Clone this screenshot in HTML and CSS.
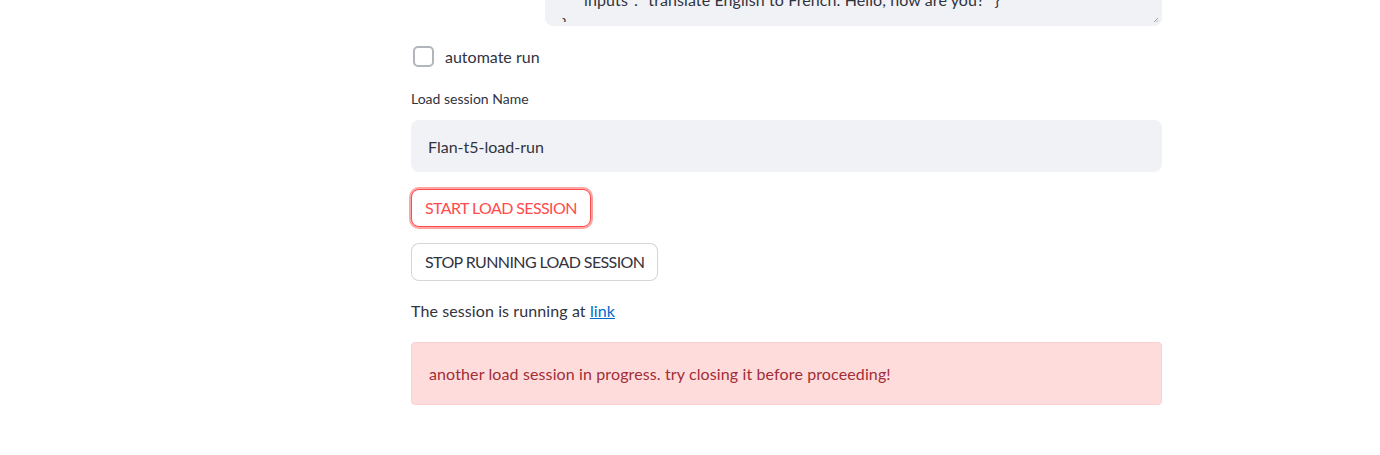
FILE: index.html
```html
<!DOCTYPE html>
<html>
<head>
<meta charset="utf-8">
<link rel="stylesheet" href="styles.css">
</head>
<body>
<div class="main">
  <div class="textarea">
    <div class="clip">
      <div class="code">
        <div class="line l1">"inputs": "translate English to French. Hello, how are you?" }</div>
        <div class="line">}</div>
      </div>
    </div>
    <svg class="grip" width="6" height="6" viewBox="0 0 6 6"><path d="M1 5 L5 1 M3.5 5 L5 3.5" stroke="#8a8d96" stroke-width="0.8"/></svg>
  </div>

  <label class="check">
    <span class="box"></span>
    <span class="check-label">automate run</span>
  </label>

  <div class="field-label">Load session Name</div>
  <div class="input">Flan-t5-load-run</div>

  <button class="btn btn-focus">START LOAD SESSION</button>
  <button class="btn">STOP RUNNING LOAD SESSION</button>

  <p class="text">The session is running at <a href="#">link</a></p>

  <div class="alert">another load session in progress. try closing it before proceeding!</div>
</div>
</body>
</html>
```

FILE: styles.css
```css
* { box-sizing: border-box; }
html, body { margin: 0; padding: 0; background: #fff; }
body {
  font-family: Lato, "Liberation Sans", sans-serif;
  color: #31333f;
  font-size: 16px;
}
.main {
  margin-left: 411px;
  width: 751px;
  display: flex;
  flex-direction: column;
  align-items: flex-start;
}
.textarea {
  position: relative;
  margin-left: 134px;
  width: 617px;
  height: 26px;
  background: #f0f2f6;
  border-radius: 0 0 8px 8px;
  padding: 0 17px;
}
.clip {
  height: 22px;
  overflow: hidden;
}
.code {
  margin-top: -12px;
  line-height: 24px;
  letter-spacing: 0.1px;
}
.l1 { padding-left: 16px; }
.grip { position: absolute; right: 3px; bottom: 3px; }

.check {
  display: flex;
  align-items: center;
  margin-top: 20px;
  margin-left: 2px;
  height: 20px;
}
.box {
  width: 21px;
  height: 21px;
  border: 2px solid #b3b5bc;
  border-radius: 5px;
  background: #fff;
}
.check-label { margin-left: 11px; font-size: 16px; }

.field-label {
  margin-top: 23px;
  font-size: 14px;
  line-height: 20px;
}
.input {
  margin-top: 11px;
  width: 751px;
  height: 52px;
  background: #f0f2f6;
  border-radius: 8px;
  padding-left: 17px;
  display: flex;
  align-items: center;
  font-size: 16px;
}
.btn {
  font-family: inherit;
  font-size: 16px;
  letter-spacing: -0.6px;
  color: #31333f;
  background: #fff;
  border: 1px solid rgba(49, 51, 63, 0.2);
  border-radius: 8px;
  height: 38px;
  padding: 0 13px;
  line-height: 36px;
  margin-top: 16px;
}
.btn-focus {
  margin-top: 17px;
  color: #ff4b4b;
  border-color: #ff4b4b;
  box-shadow: 0 0 0 2px rgba(255, 75, 75, 0.5);
}
.text {
  margin: 18px 0 0;
  line-height: 24px;
  letter-spacing: 0.1px;
}
.text a { color: #0068c9; }
.alert {
  margin-top: 19px;
  width: 751px;
  height: 63px;
  background: #ffdcdc;
  border: 1px solid #fcd0d0;
  border-radius: 4px;
  color: #9f2e36;
  padding-left: 17px;
  display: flex;
  align-items: center;
  letter-spacing: 0.12px;
}
```
